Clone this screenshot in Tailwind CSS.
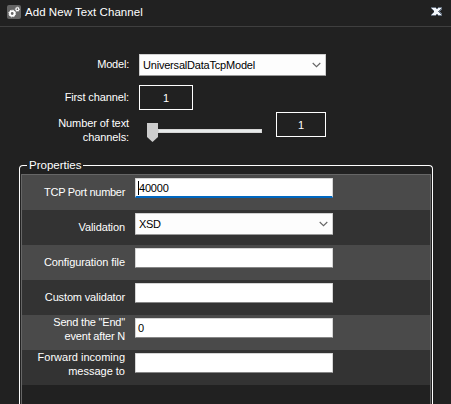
<!DOCTYPE html>
<html lang="en">
<head>
    <meta charset="UTF-8">
    <meta name="viewport" content="width=device-width, initial-scale=1.0">
    <title>Add New Text Channel</title>
    <script src="https://cdn.jsdelivr.net/npm/@tailwindcss/browser@4"></script>
</head>
<body class="w-[451px] h-[404px] overflow-hidden bg-[#212121] text-white text-[11px] leading-[14px] font-['Liberation_Sans',Arial,sans-serif]">
    <!-- Title bar -->
    <header class="flex items-center h-[27px] border-b border-[#3f3f3f] pl-[7px] pr-[9px] pb-[3px]">
        <svg class="w-[14px] h-[14px] mt-[1px]" viewBox="0 0 14 14">
            <rect width="14" height="14" rx="2" fill="#656565"/>
            <circle cx="5.2" cy="8.5" r="2.3" fill="none" stroke="#fff" stroke-width="1.8"/>
            <circle cx="5.2" cy="8.5" r="3.4" fill="none" stroke="#fff" stroke-width="1" stroke-dasharray="1.3 1.37"/>
            <circle cx="10.4" cy="4.2" r="1.4" fill="none" stroke="#fff" stroke-width="1.1"/>
            <circle cx="10.4" cy="4.2" r="2.1" fill="none" stroke="#fff" stroke-width=".8" stroke-dasharray=".9 .75"/>
        </svg>
        <h1 class="ml-[4px] flex-1 whitespace-nowrap text-[11.5px] tracking-[0.05px]">Add New Text Channel</h1>
        <button class="w-[11px] h-[9px]" aria-label="Close">
            <svg class="block w-[11px] h-[9px]" viewBox="0 0 11 9" shape-rendering="crispEdges">
                <path d="M0 0H4L5.500 1.500L7 0H11V2L8.500 4.500L11 7V9H7L5.500 7.500L4 9H0V7L2.500 4.500L0 2Z" fill="#66717f"/>
                <path d="M1 1H4L5.500 2.500L7 1H10L7.500 4.500L10 8H7L5.500 6.500L4 8H1L3.500 4.500Z" fill="#f2f6fb"/>
            </svg>
        </button>
    </header>

    <main class="pt-[27px]">
        <!-- Channel settings -->
        <div class="flex h-[31px]">
            <label class="w-[129px] pt-[3px] text-right tracking-[-0.2px]">Model:</label>
            <div class="ml-[10px] flex w-[187px] h-[22px] items-center justify-between rounded-[1px] border border-[#d0d0d0] border-b-[#999] bg-[#fdfdfd] pl-[3px] pr-[4px] text-black tracking-[-0.2px]">
                <span>UniversalDataTcpModel</span>
                <svg class="w-[9px] h-[6px]" viewBox="0 0 9 6"><path d="M.7 1L4.500 4.700L8.300 1" fill="none" stroke="#666" stroke-width="1.1"/></svg>
            </div>
        </div>
        <div class="flex h-[27px]">
            <label class="w-[129px] pt-[5px] text-right tracking-[-0.12px]">First channel:</label>
            <div class="ml-[10px] flex w-[54px] h-[25px] items-center justify-center border border-white">1</div>
        </div>
        <div class="flex h-[53px]">
            <label class="w-[129px] pt-[4px] text-right tracking-[-0.1px]">Number of text<br>channels:</label>
            <div class="ml-[18px] flex pt-[11px] w-[115px]">
                <svg class="w-[11px] h-[19px]" viewBox="0 0 11 19"><path d="M0 0H11V14L5.500 19L0 14Z" fill="#cdcdcd"/></svg>
                <div class="mt-[6px] h-[4px] flex-1 border border-[#d6d6d6] bg-[#e7eaea]"></div>
            </div>
            <div class="ml-[14px] flex w-[50px] h-[25px] items-center justify-center border border-white">1</div>
        </div>

        <!-- Properties -->
        <fieldset class="relative ml-[19px] w-[414px] h-[239px] rounded-t-[4px] border border-b-0 border-white px-[1px] pt-[8px]">
            <span class="absolute left-[7px] -top-[8px] bg-[#212121] px-[2px] text-[11.5px]">Properties</span>
            <div class="h-full border border-b-0 border-[#666]">
                <div class="flex h-[35px] bg-[#4a4a4a]">
                    <label class="w-[103px] pt-[10px] text-right tracking-[-0.3px]">TCP Port number</label>
                    <div class="ml-[10px] mt-[3px] flex w-[198px] h-[20px] rounded-[1px] border border-[#d5d5d5] border-b-2 border-b-[#0067c0] bg-white pt-[2px] pl-[2px] text-black">
                        <span class="h-[14px] w-px -mr-px bg-black"></span><span class="ml-px tracking-[-0.2px]">40000</span>
                    </div>
                </div>
                <div class="flex h-[35px] bg-[#333333]">
                    <label class="w-[103px] pt-[10px] text-right tracking-[-0.1px]">Validation</label>
                    <div class="ml-[10px] mt-[3px] flex w-[198px] h-[22px] items-center justify-between rounded-[1px] border border-[#d0d0d0] border-b-[#999] bg-[#fdfdfd] pl-[3px] pr-[4px] text-black tracking-[-0.3px]">
                        <span>XSD</span>
                        <svg class="w-[9px] h-[6px]" viewBox="0 0 9 6"><path d="M.7 1L4.500 4.700L8.300 1" fill="none" stroke="#666" stroke-width="1.1"/></svg>
                    </div>
                </div>
                <div class="flex h-[35px] bg-[#4a4a4a]">
                    <label class="w-[103px] pt-[10px] text-right tracking-[-0.08px]">Configuration file</label>
                    <div class="ml-[10px] mt-[3px] w-[198px] h-[20px] rounded-[1px] border border-[#d5d5d5] border-b-[#868686] bg-white"></div>
                </div>
                <div class="flex h-[35px] bg-[#333333]">
                    <label class="w-[103px] pt-[10px] text-right tracking-[-0.15px]">Custom validator</label>
                    <div class="ml-[10px] mt-[3px] w-[198px] h-[20px] rounded-[1px] border border-[#d5d5d5] border-b-[#868686] bg-white"></div>
                </div>
                <div class="flex h-[35px] bg-[#4a4a4a]">
                    <label class="w-[103px] text-right tracking-[-0.2px]">Send the "End"<br>event after N</label>
                    <div class="ml-[10px] mt-[3px] w-[198px] h-[20px] rounded-[1px] border border-[#d5d5d5] border-b-[#868686] bg-white pt-[2px] pl-[2px] text-black">0</div>
                </div>
                <div class="flex h-[35px] bg-[#333333]">
                    <label class="w-[103px] text-right">Forward incoming<br>message to</label>
                    <div class="ml-[10px] mt-[3px] w-[198px] h-[20px] rounded-[1px] border border-[#d5d5d5] border-b-[#868686] bg-white"></div>
                </div>
            </div>
        </fieldset>
    </main>
</body>
</html>
